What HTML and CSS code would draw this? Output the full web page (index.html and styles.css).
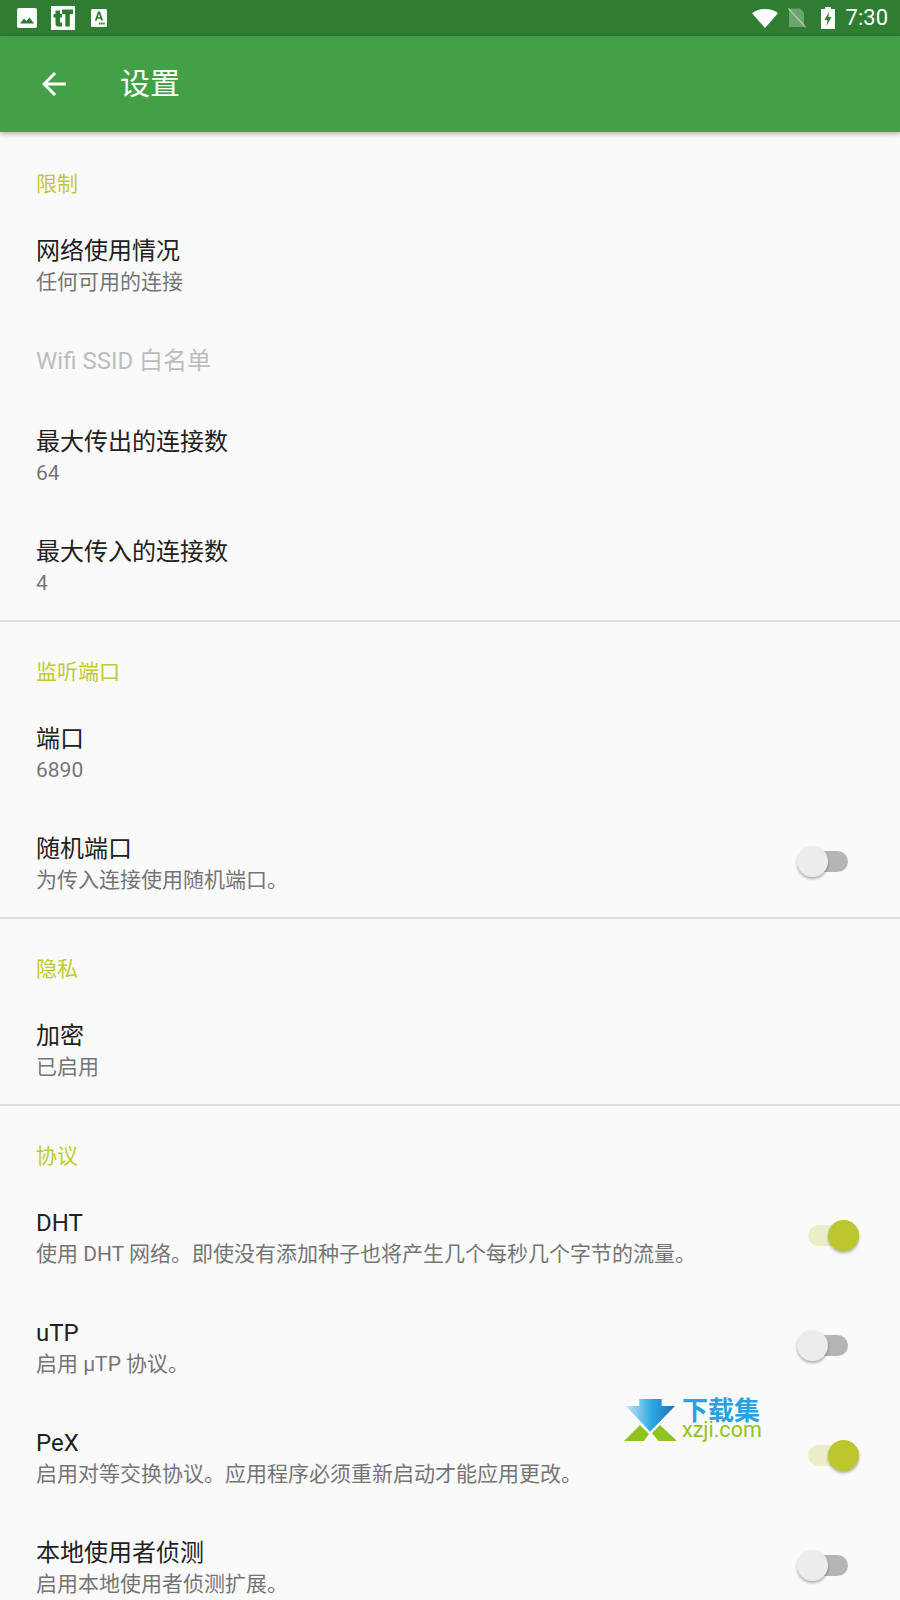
FILE: index.html
```html
<!DOCTYPE html>
<html lang="zh-CN">
<head>
  <meta charset="UTF-8">
  <title>设置</title>
  <meta name="viewport" content="width=device-width, initial-scale=1.0">
  <link rel="stylesheet" href="styles.css">
</head>
<body>
  <div class="phone">
    <!-- status bar -->
    <div class="status-bar">
      <div class="status-left">
        <svg class="ic-image" viewBox="0 0 20 20"><rect width="20" height="20" rx="2" fill="#fff"/><path d="M3 15.500 7 10.500 9.500 13 12.500 9.500 17 15.500Z" fill="#2e7d32"/></svg>
        <svg class="ic-tt" viewBox="0 0 24 24"><rect width="24" height="24" fill="#fff"/><path d="M2.500 8H4.500V4.500H9V8H11V11.500H9V16.500H11V20.500H7Q4.500 20.500 4.500 17.500V11.500H2.500ZM11 3.500H22V8H18.800V20.500H14.300V8H11Z" fill="#2e7d32"/></svg>
        <svg class="ic-a" viewBox="0 0 16 18"><rect width="16" height="18" rx="1.500" fill="#fff"/><path d="M3.800 11.500 7 2.500H9L12.200 11.500H10.200L9.600 9.800H6.400L5.800 11.500ZM6.900 8.200H9.100L8 4.800Z" fill="#2e7d32"/><path d="M8 14.500H14" stroke="#2e7d32" stroke-width="2" stroke-dasharray="1.500 .6"/></svg>
      </div>
      <div class="status-right">
        <svg class="ic-wifi" viewBox="0 0 26 19"><path d="M13 19 0 4.200Q5.500 0 13 0T26 4.200Z" fill="#fff"/></svg>
        <svg class="ic-sim" viewBox="0 0 18 20"><path d="M1 .5H12L16 4.500V19H1Z" fill="#fff" fill-opacity=".3"/><path d="M0 0 18 19.500" stroke="#fff" stroke-opacity=".45" stroke-width="1.200"/></svg>
        <svg class="ic-batt" viewBox="0 0 14 22"><path d="M4 0H10V2H14V22H0V2H4Z" fill="#fff"/><path d="M8 5 3.500 13H6.500L5.500 19 10.500 10H7.500Z" fill="#2e7d32"/></svg>
        <span class="status-time">7:30</span>
      </div>
    </div>

    <!-- app bar -->
    <header class="app-bar">
      <svg class="back" viewBox="0 0 24 24"><path d="M20 11H7.830l5.590-5.590L12 4l-8 8 8 8 1.410-1.410L7.830 13H20v-2z" fill="#fff"/></svg>
      <h1>设置</h1>
    </header>

    <main class="settings">
      <section class="group">
        <h2>限制</h2>
        <div class="row"><div class="row-text"><div class="title">网络使用情况</div><div class="sub">任何可用的连接</div></div></div>
        <div class="row row-single"><div class="row-text"><div class="title disabled">Wifi SSID 白名单</div></div></div>
        <div class="row"><div class="row-text"><div class="title">最大传出的连接数</div><div class="sub">64</div></div></div>
        <div class="row"><div class="row-text"><div class="title">最大传入的连接数</div><div class="sub">4</div></div></div>
      </section>

      <section class="group">
        <h2>监听端口</h2>
        <div class="row"><div class="row-text"><div class="title">端口</div><div class="sub">6890</div></div></div>
        <div class="row">
          <div class="row-text"><div class="title">随机端口</div><div class="sub">为传入连接使用随机端口。</div></div>
          <div class="switch"><span class="track"></span><span class="thumb"></span></div>
        </div>
      </section>

      <section class="group">
        <h2>隐私</h2>
        <div class="row"><div class="row-text"><div class="title">加密</div><div class="sub">已启用</div></div></div>
      </section>

      <section class="group">
        <h2>协议</h2>
        <div class="row">
          <div class="row-text"><div class="title">DHT</div><div class="sub">使用 DHT 网络。即使没有添加种子也将产生几个每秒几个字节的流量。</div></div>
          <div class="switch on"><span class="track"></span><span class="thumb"></span></div>
        </div>
        <div class="row">
          <div class="row-text"><div class="title">uTP</div><div class="sub">启用 µTP 协议。</div></div>
          <div class="switch"><span class="track"></span><span class="thumb"></span></div>
        </div>
        <div class="row">
          <div class="row-text"><div class="title">PeX</div><div class="sub">启用对等交换协议。应用程序必须重新启动才能应用更改。</div></div>
          <div class="switch on"><span class="track"></span><span class="thumb"></span></div>
        </div>
        <div class="row">
          <div class="row-text"><div class="title">本地使用者侦测</div><div class="sub">启用本地使用者侦测扩展。</div></div>
          <div class="switch"><span class="track"></span><span class="thumb"></span></div>
        </div>
      </section>
    </main>

    <!-- watermark -->
    <div class="watermark">
      <svg class="wm-logo" viewBox="0 0 53 42">
        <defs><linearGradient id="wmArrow" x1="0" x2="1" y1="0" y2="0"><stop offset="0" stop-color="#c4e6f7"/><stop offset=".55" stop-color="#27a6e2"/><stop offset="1" stop-color="#2a6db5"/></linearGradient></defs>
        <path d="M15.300 0H37.700V7H51L26 32.700 2 7H15.300Z" fill="url(#wmArrow)"/>
        <path d="M0 42 16 26 25 35 20 42Z" fill="#8fc31f"/>
        <path d="M53 42 36 26 28 34 34.500 42Z" fill="#8fc31f"/>
      </svg>
      <div class="wm-text">
        <div class="wm-cn">下载集</div>
        <div class="wm-en">xzji.com</div>
      </div>
    </div>
  </div>
</body>
</html>
```

FILE: styles.css
```css
html, body {
  margin: 0;
  padding: 0;
  background-color: #fafafa;
  box-sizing: border-box;
  font-family: 'Roboto', 'Noto Sans CJK SC', sans-serif;
}
*, *::before, *::after {
  box-sizing: inherit;
}
.phone {
  position: relative;
  width: 900px;
  height: 1600px;
  overflow: hidden;
}

/* status bar */
.status-bar {
  display: flex;
  justify-content: space-between;
  align-items: center;
  height: 36px;
  padding: 0 12px 0 17px;
  background-color: #2e7d32;
}
.status-left, .status-right {
  display: flex;
  align-items: center;
}
.ic-image { width: 20px; height: 20px; margin-right: 14px; }
.ic-tt { width: 24px; height: 24px; margin-right: 16px; }
.ic-a { width: 16px; height: 18px; }
.ic-wifi { width: 26px; height: 19px; margin-right: 10px; }
.ic-sim { width: 18px; height: 20px; margin-right: 15px; }
.ic-batt { width: 14px; height: 22px; margin-right: 11px; }
.status-time {
  color: #fff;
  font-size: 22px;
  line-height: 36px;
}

/* app bar */
.app-bar {
  position: relative;
  display: flex;
  align-items: center;
  height: 96px;
  padding-left: 36px;
  background-color: #43a047;
  box-shadow: 0 2px 5px rgba(0, 0, 0, 0.3);
}
.back { width: 36px; height: 36px; margin-right: 48px; }
.app-bar h1 {
  margin: 0;
  color: #fff;
  font-size: 30px;
  line-height: 40px;
  font-weight: 400;
}

/* settings list */
.group {
  border-bottom: 2px solid #dedede;
}
.group:last-child {
  border-bottom: none;
}
.group h2 {
  margin: 0;
  padding: 35px 36px 0;
  height: 77px;
  color: #c0ca33;
  font-size: 21px;
  line-height: 30px;
  font-weight: 400;
}
.group:first-child h2 {
  height: 79px;
  padding-top: 37px;
}
.row {
  display: flex;
  align-items: center;
  justify-content: space-between;
  padding: 25px 36px 23px;
}
.row:last-child {
  padding-bottom: 21px;
}
.group:last-child .row:last-child {
  padding-bottom: 23px;
}
.row-single {
  height: 81px;
  padding-top: 0;
  padding-bottom: 0;
}
.title {
  color: #212121;
  font-size: 24px;
  line-height: 31px;
}
.title.disabled {
  color: #bdbdbd;
}
.sub {
  color: #757575;
  font-size: 21px;
  line-height: 31px;
}

/* switch */
.switch {
  position: relative;
  flex: none;
  width: 62px;
  height: 31px;
  margin: 0 5px 7px 0;
}
.track {
  position: absolute;
  left: 11px;
  top: 5px;
  width: 40px;
  height: 21px;
  border-radius: 11px;
  background-color: #b5b5b5;
}
.thumb {
  position: absolute;
  left: 0;
  top: 0;
  width: 31px;
  height: 31px;
  border-radius: 50%;
  background-color: #ececec;
  box-shadow: 0 2px 3px rgba(0, 0, 0, 0.3);
}
.switch.on .track { background-color: #ebefc9; }
.switch.on .thumb { left: 31px; background-color: #bdc62f; }

/* watermark */
.watermark {
  position: absolute;
  left: 624px;
  top: 1399px;
  display: flex;
  gap: 5px;
}
.wm-logo { width: 53px; height: 42px; }
.wm-cn {
  color: #29a3e0;
  font-size: 26px;
  font-weight: 700;
  line-height: 24px;
}
.wm-en {
  margin-top: -2px;
  color: #8fc31f;
  font-size: 21.5px;
  line-height: 18px;
}
```
